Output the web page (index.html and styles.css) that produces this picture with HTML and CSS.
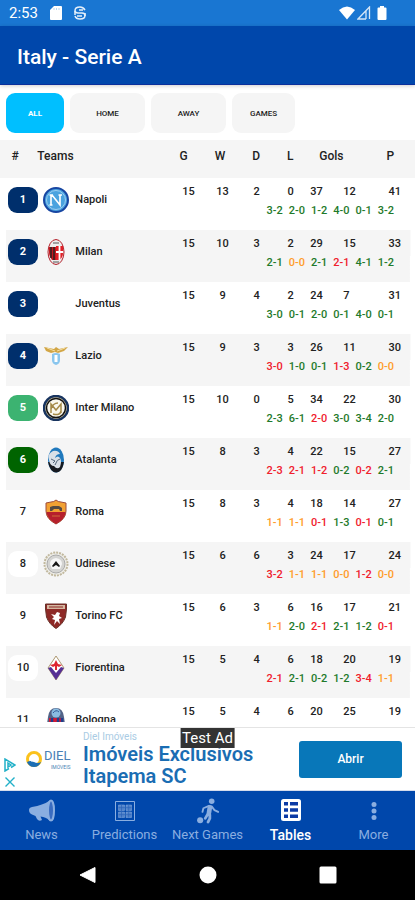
FILE: index.html
```html
<!DOCTYPE html>
<html lang="en">
<head>
    <meta charset="UTF-8">
    <meta name="viewport" content="width=device-width, initial-scale=1">
    <title>Italy - Serie A</title>
    <link rel="stylesheet" href="styles.css">
</head>
<body>
    <div class="status-bar">
        <span class="clock">2:53</span>
        <svg class="status-icon" width="12" height="14" viewBox="0 0 12 14"><path d="M4 0h7q1 0 1 1v12q0 1-1 1H1q-1 0-1-1V4z" fill="#fff"/><path d="M4 2v2M6.500 2v2M9 2v2" stroke="#b9d6f0"/></svg>
        <svg class="status-icon" width="12" height="14" viewBox="0 0 12 14" fill="none" stroke="#e4effa" stroke-width="1.500"><path d="M11 4Q9 1 6 1Q1 1 1 4.500Q1 7 4 7h4q3 0 3 2.500Q11 13 6 13Q2 13 1 10"/><path d="M9 4H5M3 10h5M1 5v4M11 7v3"/></svg>
        <span class="status-right">
            <svg width="16" height="14" viewBox="0 0 16 14"><path d="M0 4Q8-3 16 4L8 13.500z" fill="#fff"/></svg>
            <svg width="14" height="14" viewBox="0 0 14 14" fill="none" stroke="#d5e6f7" stroke-width="1.300"><path d="M9 13H1L12.500 1v12M9 5v8"/></svg>
            <svg class="battery" width="10" height="14" viewBox="0 0 10 14"><path d="M3 0h4v1.500h1.500q1 0 1 1V13q0 1-1 1h-7q-1 0-1-1V2.500q0-1 1-1H3z" fill="#fff"/></svg>
        </span>
    </div>

    <header class="app-bar">
        <h1>Italy - Serie A</h1>
    </header>

    <div class="filters">
        <button class="filter filter-all active" type="button">ALL</button>
        <button class="filter" type="button">HOME</button>
        <button class="filter" type="button">AWAY</button>
        <button class="filter filter-games" type="button">GAMES</button>
    </div>

    <main class="standings">
        <table>
            <colgroup>
                <col class="col-pos">
                <col class="col-team">
                <col class="col-num">
                <col class="col-num">
                <col class="col-num">
                <col class="col-num">
                <col class="col-goal">
                <col class="col-goal">
                <col class="col-pts">
            </colgroup>
            <thead>
                <tr>
                    <th class="th-pos">#</th>
                    <th class="th-team">Teams</th>
                    <th class="th-g">G</th>
                    <th class="th-w">W</th>
                    <th>D</th>
                    <th>L</th>
                    <th class="th-gols" colspan="2">Gols</th>
                    <th class="th-p">P</th>
                </tr>
            </thead>
        </table>
    </main>

    <aside class="ad">
        <div class="ad-marks">
            <svg width="12" height="14" viewBox="0 0 12 14" fill="none" stroke="#22b0c8" stroke-width="1.500"><path d="M5 10.500L1 13V1l10 6-4 2.500"/><path d="M4 5l3 2-3 2z"/></svg>
            <svg width="12" height="12" viewBox="0 0 12 12" stroke="#22b0c8" stroke-width="1.400"><path d="M1.500 1.500l9 9M10.500 1.500l-9 9"/></svg>
        </div>
        <div class="ad-logo">
            <svg width="16" height="16" viewBox="0 0 16 16"><circle cx="8" cy="8" r="6.500" fill="none" stroke="#fbc21d" stroke-width="3"/><path d="M1 11q3.500-2 7 0t7 0q-2 5-7 5t-7-5z" fill="#1d6fb5"/><path d="M5 10.500V8l3-3 3 3v2.500z" fill="#fff"/></svg>
            <div class="ad-brand">
                <span>DIEL</span>
                <small>IMÓVEIS</small>
            </div>
        </div>
        <div class="ad-text">
            <span class="ad-source">Diel Imóveis</span>
            <strong>Imóveis Exclusivos Itapema SC</strong>
        </div>
        <button class="ad-button" type="button">Abrir</button>
        <span class="test-ad">Test Ad</span>
    </aside>

    <nav class="bottom-nav">
        <a href="#news">
            <svg width="28" height="24" viewBox="0 0 28 24" fill="currentColor"><path d="M1 11Q1 8.500 4 8Q15 6 21 2V21Q18 18 12.500 17.500L14 21Q11 23 9 20L7.500 17 4 15.500Q1 14 1 11z"/><ellipse cx="23" cy="11.500" rx="3" ry="10" fill="#3a6cc0" stroke="currentColor" stroke-width="2"/></svg>
            News
        </a>
        <a href="#predictions">
            <svg width="22" height="24" viewBox="0 0 22 24" fill="none" stroke="currentColor"><path d="M1.500 2.500h19v19h-19z"/><path d="M4.500 6h6v5.500h-6zM12 6h5.500v5.500H12zM4.500 13h6v5.500h-6zM12 13h5.500v5.500H12z" fill="currentColor" fill-opacity=".6" stroke-width=".5"/><path d="M4.500 8.700h13M4.500 15.700h13M7.500 6v12.500M14.700 6v12.500" stroke="#2b63b9" stroke-width=".7"/></svg>
            Predictions
        </a>
        <a href="#next">
            <svg width="24" height="28" viewBox="0 0 26 28" fill="none" stroke="currentColor" stroke-linecap="round" stroke-linejoin="round"><circle cx="17" cy="3.500" r="3" fill="currentColor" stroke="none"/><path d="M15 10l-1 6" stroke-width="5"/><path d="M14 8.500L8 11l-1 4M17 9l3 4 4 2" stroke-width="2"/><path d="M13 17l-3 5M15 18v4l-2 4" stroke-width="3"/><circle cx="4.500" cy="24" r="3.300" fill="currentColor" stroke="none"/></svg>
            Next Games
        </a>
        <a class="active" href="#tables">
            <svg width="20" height="24" viewBox="0 0 20 24"><rect width="20" height="22" rx="2.500" fill="currentColor"/><path d="M3 3h4v3.500H3zM9 3h8v3.500H9zM3 9.300h4v3.500H3zM9 9.300h8v3.500H9zM3 15.500h4V19H3zM9 15.500h8V19H9z" fill="#0b3aa5"/></svg>
            Tables
        </a>
        <a href="#more">
            <svg width="6" height="20" viewBox="0 0 6 20" fill="currentColor"><circle cx="3" cy="3.500" r="2.500"/><circle cx="3" cy="10" r="2.500"/><circle cx="3" cy="16.500" r="2.500"/></svg>
            More
        </a>
    </nav>

    <div class="system-nav">
        <svg width="18" height="18" viewBox="0 0 18 18"><path d="M16 1.500v15L1 9z" fill="#fff" stroke="#fff" stroke-linejoin="round"/></svg>
        <svg width="18" height="18" viewBox="0 0 18 18"><circle cx="9" cy="9" r="8.500" fill="#fff"/></svg>
        <svg width="18" height="18" viewBox="0 0 18 18"><rect x=".5" y=".5" width="17" height="17" rx="1.500" fill="#fff"/></svg>
    </div>

    <script>
        const crests = {
            napoli: '<circle cx="13" cy="13" r="12" fill="#4aa3df" stroke="#1746a2" stroke-width="2"/><circle cx="13" cy="13" r="9.500" fill="none" stroke="#9bcdf0"/><path d="M8 18V8h1l8 10V8M6.500 8H10M6.500 18h3M15.500 8H19" fill="none" stroke="#fff" stroke-width="1.600"/>',
            milan: '<ellipse cx="13" cy="13" rx="8" ry="12.500" fill="#eee" stroke="#b3202a"/><path d="M6 8h7v13H9Q6 18 6 13z" fill="#c4161c"/><path d="M8 8v11M11 8v13" stroke="#222" stroke-width="1.400"/><path d="M13 7h7v7q0 5-4 7h-3z" fill="#e01f26"/><path d="M16.500 7v14M13 13h7" stroke="#fff" stroke-width="1.800"/><path d="M10 4h6M10 23h6" stroke="#555"/>',
            lazio: '<path d="M1 4l10 2 2-2 3 2 9-2-4 4-6 2-3-1-4 1-5-2z" fill="#d2a646"/><path d="M4 5l8 3M22 5l-8 3" stroke="#f4dfa4"/><path d="M9 11q4-2 8 0v6q0 4-4 5-4-1-4-5z" fill="#8ac6ee"/><path d="M11.500 12h3v7h-3z" fill="#fff"/>',
            inter: '<circle cx="13" cy="13" r="12" fill="#d7c9a0" stroke="#18345f" stroke-width="2.500"/><circle cx="13" cy="13" r="9.500" fill="#faf8ed" stroke="#111" stroke-width="1.500"/><path d="M8 18V9l5 6 5-6v9M8 14q2-6 7-6M10 19q7 2 8-3" fill="none" stroke="#a58a48" stroke-width="1.500"/>',
            atalanta: '<ellipse cx="13" cy="13" rx="8" ry="12.500" fill="#2079bd"/><path d="M5 15q2 10 8 10.500T21 15z" fill="#171a20"/><path d="M6 13q-2-6 4-9 5-1 7 3-4 0-5 4 3-3 5 0 2 3 0 9-3 3-6-1-4 0-5-6z" fill="#d9e0e8"/><path d="M8 12l4 2-2 2M12 18q2-6 5-6" fill="none" stroke="#526579"/>',
            roma: '<path d="M3 4l5-1q3 0 5-2 2 2 5 2l5 1v8q0 8-10 13Q3 20 3 12z" fill="#f2a133" stroke="#9e4c3e"/><path d="M3.500 13h19q0 7-9.500 12Q4 20 3.500 13z" fill="#b6202c"/><path d="M7 12V8l3-1h6l3 2v3h-2l-1-2h-5l-2 2z" fill="#564a42"/><path d="M9 17h8" stroke="#ce6c39"/>',
            udinese: '<circle cx="13" cy="13" r="11.500" fill="#efeee8" stroke="#c1b89e" stroke-width="2" stroke-dasharray="2 1"/><circle cx="13" cy="13" r="9" fill="#d4d4d2" stroke="#aaa"/><path d="M7 13q0-5 6-6 6 1 6 6l-2 5H9z" fill="#f6f6f6"/><path d="M9 15l4-5 4 5-1 1-3-2-3 2z" fill="#161616"/>',
            torino: '<path d="M2.500 1h21v5l-1 8Q20 21 13 25.500 6 21 3.500 14L2.500 6z" fill="#8e2926" stroke="#69332b"/><path d="M4 2h18v4H4z" fill="#d4b8a1"/><path d="M6 4h14" stroke="#8e2926"/><path d="M8 11l4 1 2-3 3 1-1 3 3 2-3 1 1 5-3-3-3 4 1-5-3-1 2-2z" fill="#fff"/>',
            fiorentina: '<path d="M13 1l8 12-8 12-8-12z" fill="#fff" stroke="#ad9870"/><path d="M5 13l3-1 5 6 5-6 3 1-8 12z" fill="#563095"/><path d="M13 5l2 4 4 1-3 2-2-1v4h-2v-4l-2 1-3-2 4-1z" fill="#df2530"/>',
            bologna: '<path d="M5 10Q6 1 13 1t8 9l1 7H4z" fill="#536387"/><circle cx="13" cy="6" r="4.500" fill="#8abde2"/><path d="M6 11h14v8q-2 4-7 6-5-2-7-6z" fill="#d51932"/><path d="M9 11v9M15 11v10M19 11v7" stroke="#213d8c" stroke-width="2.500"/><path d="M10 6q3-4 6-1" fill="none" stroke="#335c96"/>'
        };

        // position, badge, crest, name, [G, W, D, L, goals for, goals against, P], recent results
        const teams = [
            [1, 'navy', 'napoli', 'Napoli', [15, 13, 2, 0, 37, 12, 41], 'w3-2 w2-0 w1-2 w4-0 w0-1 w3-2'],
            [2, 'navy', 'milan', 'Milan', [15, 10, 3, 2, 29, 15, 33], 'w2-1 d0-0 w2-1 l2-1 w4-1 w1-2'],
            [3, 'navy', '', 'Juventus', [15, 9, 4, 2, 24, 7, 31], 'w3-0 w0-1 w2-0 w0-1 w4-0 w0-1'],
            [4, 'navy', 'lazio', 'Lazio', [15, 9, 3, 3, 26, 11, 30], 'l3-0 w1-0 w0-1 l1-3 w0-2 d0-0'],
            [5, 'mint', 'inter', 'Inter Milano', [15, 10, 0, 5, 34, 22, 30], 'w2-3 w6-1 l2-0 w3-0 w3-4 w2-0'],
            [6, 'green', 'atalanta', 'Atalanta', [15, 8, 3, 4, 22, 15, 27], 'l2-3 l2-1 l1-2 w0-2 l0-2 w2-1'],
            [7, 'plain', 'roma', 'Roma', [15, 8, 3, 4, 18, 14, 27], 'd1-1 d1-1 l0-1 w1-3 l0-1 w0-1'],
            [8, 'plain', 'udinese', 'Udinese', [15, 6, 6, 3, 24, 17, 24], 'l3-2 d1-1 d1-1 d0-0 l1-2 d0-0'],
            [9, 'plain', 'torino', 'Torino FC', [15, 6, 3, 6, 16, 17, 21], 'd1-1 w2-0 l2-1 w2-1 w1-2 l0-1'],
            [10, 'plain', 'fiorentina', 'Fiorentina', [15, 5, 4, 6, 18, 20, 19], 'l2-1 w2-1 w0-2 w1-2 l3-4 d1-1'],
            [11, 'plain', 'bologna', 'Bologna', [15, 5, 4, 6, 20, 25, 19], '']
        ];

        const table = document.querySelector('.standings table');

        teams.forEach(function ([pos, badge, crest, name, stats, form]) {
            const body = document.createElement('tbody');
            const cells = stats.map((n, i) => `<td class="${i === 4 || i === 5 ? 'goals' : 'num'}">${n}</td>`).join('');
            const results = form.split(' ').map(r => `<span class="${r[0]}">${r.slice(1)}</span>`).join('');
            body.innerHTML = `
                <tr class="stats">
                    <td rowspan="2" class="pos"><span class="badge ${badge}">${pos}</span></td>
                    <td rowspan="2" class="team"><div><svg width="26" height="26" viewBox="0 0 26 26">${crests[crest] || ''}</svg>${name}</div></td>
                    ${cells}
                </tr>
                <tr class="recent"><td colspan="7"><div>${form ? results : ''}</div></td></tr>`;
            table.appendChild(body);
        });
    </script>
</body>
</html>
```
FILE: styles.css
```css
* {
    box-sizing: border-box;
}

body {
    margin: 0;
    height: 100vh;
    display: flex;
    flex-direction: column;
    font-family: Roboto, sans-serif;
    background: #fff;
    color: #222;
    overflow: hidden;
}

svg {
    display: block;
    flex-shrink: 0;
}

button {
    font-family: inherit;
    border: none;
    padding: 0;
    cursor: pointer;
}

.status-bar {
    display: flex;
    align-items: center;
    gap: 12px;
    height: 26px;
    padding: 0 28px 0 9px;
    background: #1976d2;
    color: #fff;
}

.clock {
    font-size: 15px;
}

.status-right {
    display: flex;
    gap: 2px;
    margin-left: auto;
}

.battery {
    margin-left: 4px;
}

.app-bar {
    display: flex;
    align-items: center;
    height: 59px;
    padding: 3px 0 0 17px;
    background: #0047ab;
    border-bottom: 1px solid #0a2f9c;
    box-shadow: 0 1px 4px rgba(0,0,0,0.2);
    color: #fff;
}

.app-bar h1 {
    margin: 0;
    font-size: 21px;
    font-weight: 500;
}

.filters {
    display: flex;
    gap: 6px;
    padding: 8px 6px 7px;
}

.filter {
    width: 75px;
    height: 40px;
    border-radius: 9px;
    background: #f5f5f5;
    color: #222;
    font-size: 8px;
    font-weight: 500;
}

.filter-all {
    width: 58px;
}

.filter-games {
    width: 63px;
}

.filter.active {
    background: #00bfff;
    color: #fff;
    font-weight: 700;
}

.standings {
    flex: 1;
    min-height: 0;
    overflow: hidden;
    margin-bottom: 5px;
}

table {
    width: 100%;
    table-layout: fixed;
    border-collapse: collapse;
}

.col-pos {
    width: 9%;
}

.col-num {
    width: 8.2%;
}

.col-goal {
    width: 8%;
}

.col-pts {
    width: 10%;
}

th, td {
    padding: 0;
    vertical-align: top;
}

thead {
    background: #f5f5f5;
}

th {
    height: 38px;
    padding-top: 8px;
    font-size: 12px;
    line-height: 16px;
    font-weight: 500;
}

.th-pos {
    padding-right: 7px;
}

.th-team {
    text-align: left;
}

.th-g {
    padding-right: 9px;
}

.th-w {
    padding-right: 4px;
}

.th-gols {
    padding-right: 18px;
}

.th-p {
    padding-right: 8px;
}

tbody:nth-of-type(even) {
    background: linear-gradient(#f5f5f5, #f5f5f5) no-repeat 6px 0 / calc(100% - 11px) 100%;
}

.stats {
    height: 26px;
    font-size: 11px;
    line-height: 14px;
    font-weight: 500;
}

.recent {
    height: 26px;
    font-size: 11px;
    line-height: 14px;
    font-weight: 500;
}

.num {
    padding: 7px 0 0 1px;
    text-align: center;
}

.goals {
    padding: 7px 0 0 3px;
}

.pos {
    padding: 9px 0 0 8px;
}

.badge {
    display: block;
    width: 30px;
    border-radius: 9px;
    line-height: 26px;
    text-align: center;
}

.navy, .mint, .green {
    color: #fff;
    font-weight: 700;
}

.navy {
    background: #002f6c;
}

.mint {
    background: #3cb371;
}

.green {
    background: #006400;
}

.plain {
    background: #fff;
}

.team {
    padding: 9px 0 0 6px;
}

.team div {
    display: flex;
    align-items: center;
    gap: 6px;
}

.recent div {
    display: flex;
    justify-content: flex-end;
    gap: 6px;
    padding-right: 21px;
}

.w {
    color: #1f7a2b;
}

.d {
    color: #ff9c2b;
}

.l {
    color: #f0202d;
}

.ad {
    position: relative;
    display: flex;
    align-items: center;
    height: 64px;
    padding: 0 13px 0 4px;
    border-top: 1px solid #e4e4e4;
    border-bottom: 1px solid #d5dcec;
}

.ad-marks {
    display: flex;
    flex-direction: column;
    gap: 4px;
    align-self: flex-end;
    padding-bottom: 2px;
}

.ad-logo {
    display: flex;
    align-items: center;
    gap: 2px;
    width: 67px;
    padding-left: 10px;
}

.ad-brand {
    display: flex;
    flex-direction: column;
    color: #4a7fb5;
    font-size: 13px;
    line-height: 16px;
}

.ad-brand small {
    font-size: 5px;
    line-height: 6px;
    text-align: right;
}

.ad-text {
    flex: 1;
    color: #1a6db3;
}

.ad-source {
    display: block;
    font-size: 10px;
    line-height: 12px;
    color: #a9cbe4;
}

.ad-text strong {
    display: block;
    max-width: 190px;
    font-size: 20px;
    line-height: 22px;
    font-weight: 600;
}

.ad-button {
    width: 103px;
    height: 37px;
    border-radius: 3px;
    background: #0877b9;
    color: #fff;
    font-size: 12px;
    font-weight: 500;
}

/* debug label that sits over the banner */
.test-ad {
    position: absolute;
    top: 0;
    left: 50%;
    transform: translateX(-50%);
    padding: 0 2px;
    background: #333;
    color: #fff;
    font-size: 15px;
    line-height: 20px;
    white-space: nowrap;
}

.bottom-nav {
    display: flex;
    height: 59px;
    background: #0047ab;
}

.bottom-nav a {
    flex: 1;
    display: flex;
    flex-direction: column;
    align-items: center;
    justify-content: space-between;
    padding: 7px 0;
    color: #8aaee0;
    font-size: 13px;
    line-height: 16px;
    text-decoration: none;
    white-space: nowrap;
}

.bottom-nav svg {
    height: 26px;
}

.bottom-nav .active {
    color: #fff;
    font-size: 14px;
    font-weight: 500;
}

.system-nav {
    display: flex;
    justify-content: center;
    align-items: center;
    gap: 102px;
    height: 50px;
    background: #000;
}
```
